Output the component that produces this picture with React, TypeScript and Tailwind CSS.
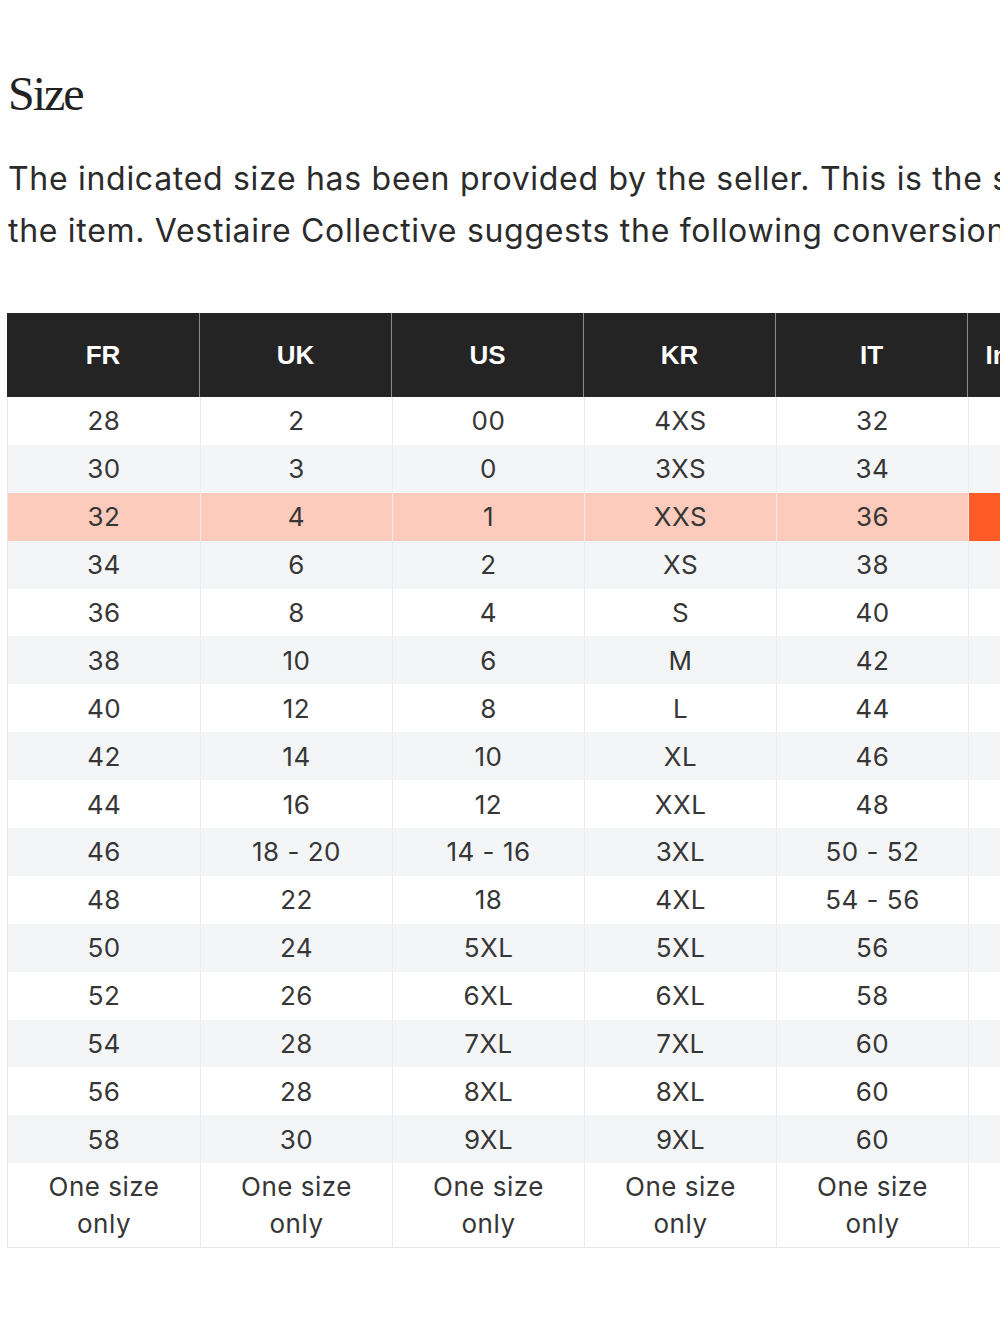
import React from "react";

const headers = ["FR", "UK", "US", "KR", "IT", "International"];
const rows: string[][] = [
  ["28", "2", "00", "4XS", "32", "XXXS"],
  ["30", "3", "0", "3XS", "34", "XXS"],
  ["32", "4", "1", "XXS", "36", "XS"],
  ["34", "6", "2", "XS", "38", "S"],
  ["36", "8", "4", "S", "40", "M"],
  ["38", "10", "6", "M", "42", "L"],
  ["40", "12", "8", "L", "44", "XL"],
  ["42", "14", "10", "XL", "46", "XXL"],
  ["44", "16", "12", "XXL", "48", "3XL"],
  ["46", "18 - 20", "14 - 16", "3XL", "50 - 52", "4XL"],
  ["48", "22", "18", "4XL", "54 - 56", "5XL"],
  ["50", "24", "5XL", "5XL", "56", "6XL"],
  ["52", "26", "6XL", "6XL", "58", "7XL"],
  ["54", "28", "7XL", "7XL", "60", "8XL"],
  ["56", "28", "8XL", "8XL", "60", "9XL"],
  ["58", "30", "9XL", "9XL", "60", "10XL"],
];

export default function App() {
  return (
    <div className="w-[1000px] h-[1333px] overflow-hidden bg-white" style={{ fontFamily: 'Inter, "Liberation Sans", Arial, sans-serif' }}>
      <div className="pt-[68px] pl-[8px]">
        <h1 className="text-[48px] leading-[52px] tracking-[-2px] text-[#222]" style={{ fontFamily: '"Liberation Serif", "Times New Roman", serif' }}>
          Size
        </h1>
        <p className="mt-[33px] text-[32px] leading-[52px] tracking-[0.7px] text-[#2b2b2b] whitespace-nowrap">
          The indicated size has been provided by the seller. This is the size on the label of
          <br />
          the item. Vestiaire Collective suggests the following conversion for your convenience.
        </p>
      </div>
      <div className="mt-[56px] ml-[7px] w-[1200px] text-[26px] tracking-[0.5px] text-[#363636]">
        <div className="flex h-[84px] bg-[#242424] text-white font-bold tracking-[0px]" style={{ fontFamily: '"Liberation Sans", Arial, sans-serif' }}>
          {headers.map((h, i) => (
            <div
              key={h}
              className={`w-[192px] shrink-0 flex items-center justify-center ${i > 0 ? "border-l border-[#8a8a8a]" : ""}`}
            >
              {h}
            </div>
          ))}
        </div>
        {rows.map((r, ri) => {
          const hl = ri === 2;
          const bg = hl ? "bg-[#fdcbbb]" : ri % 2 === 1 ? "bg-[#f4f5f7]" : "bg-white";
          return (
            <div key={ri} className={`flex h-[47.9px] ${bg} border-l border-[#e8e8ea]`}>
              {r.map((c, ci) => (
                <div
                  key={ci}
                  className={`w-[192px] shrink-0 flex items-center justify-center ${ci > 0 ? "border-l border-[#ececef]" : ""} ${hl && ci === 5 ? "bg-[#ff5b26] text-white" : ""}`}
                >
                  {c}
                </div>
              ))}
            </div>
          );
        })}
        <div className="flex h-[85px] bg-white border-l border-b border-[#e8e8ea]">
          {headers.map((_, ci) => (
            <div
              key={ci}
              className={`w-[192px] shrink-0 flex items-center justify-center text-center leading-[37px] ${ci > 0 ? "border-l border-[#ececef]" : ""}`}
            >
              One size
              <br />
              only
            </div>
          ))}
        </div>
      </div>
    </div>
  );
}
